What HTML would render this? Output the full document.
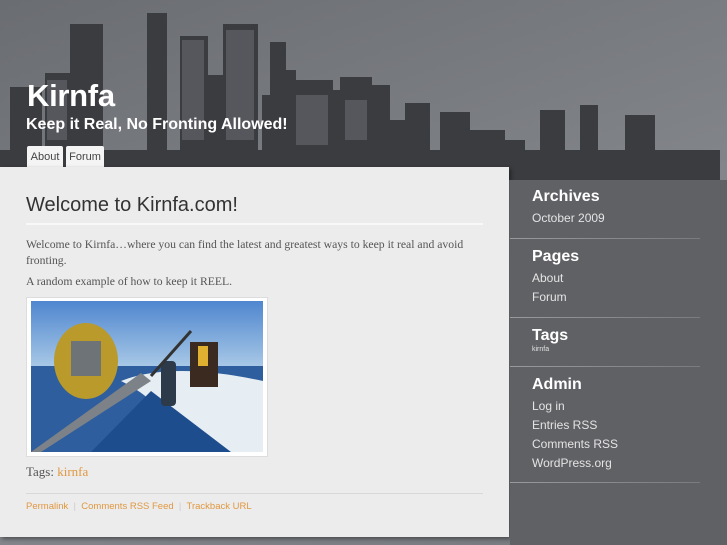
<!DOCTYPE html>
<html><head><meta charset="utf-8"><style>
*{margin:0;padding:0;box-sizing:border-box}
body{width:727px;height:545px;overflow:hidden;background:linear-gradient(160deg,#6a6d72 0%,#85888d 60%,#75787c 100%);font-family:"Liberation Sans",sans-serif;position:relative}
svg.sky{position:absolute;left:0;top:0}
#title{position:absolute;left:27px;top:78px;color:#fff;font-weight:bold;font-size:31px;letter-spacing:-0.3px}
#tag{position:absolute;left:26px;top:116px;color:#fff;font-weight:bold;font-size:16px}
.tab{position:absolute;top:146px;height:21px;background:#f4f4f4;color:#444;font-size:11px;padding:5px 0 0;text-align:center;border-radius:2px 2px 0 0}
#main{position:absolute;left:0;top:167px;width:509px;height:370px;background:#ececec;box-shadow:2px 2px 4px rgba(0,0,0,.4)}
h1{position:absolute;left:26px;top:194px;font-weight:normal;font-size:20px;color:#333}
.hr{position:absolute;left:26px;width:457px;height:2px;background:#f8f8f8}
.p{position:absolute;left:26px;font-family:"Liberation Serif",serif;font-size:11.7px;color:#555;line-height:16px;width:460px}
#side{position:absolute;left:510px;top:180px;width:217px;height:365px;background:#606165}
.sh{position:absolute;left:532px;color:#fff;font-weight:bold;font-size:16px}
.sl{position:absolute;left:532px;color:#e4e4e4;font-size:12px}
.sr{position:absolute;left:510px;width:190px;height:1px;background:linear-gradient(90deg,#9a9a9c,#7a7b7e)}
.lnk{color:#e09840}
</style></head><body>
<svg class="sky" width="727" height="200">
<g fill="#3b3c40">
<rect x="10" y="87" width="32" height="80"/>
<rect x="45" y="73" width="27" height="94"/>
<rect x="70" y="24" width="33" height="143"/>
<rect x="147" y="13" width="20" height="154"/>
<rect x="180" y="36" width="28" height="131"/>
<rect x="208" y="75" width="15" height="92"/>
<rect x="223" y="24" width="35" height="143"/>
<rect x="262" y="95" width="8" height="72"/>
<rect x="270" y="42" width="16" height="125"/>
<rect x="286" y="70" width="10" height="97"/>
<rect x="293" y="80" width="40" height="87"/>
<rect x="333" y="90" width="10" height="77"/>
<rect x="340" y="77" width="32" height="90"/>
<rect x="372" y="85" width="18" height="82"/>
<rect x="390" y="120" width="15" height="47"/>
<rect x="405" y="103" width="25" height="64"/>
<rect x="440" y="112" width="30" height="60"/>
<rect x="470" y="130" width="35" height="45"/>
<rect x="505" y="140" width="20" height="40"/>
<rect x="540" y="110" width="25" height="40"/>
<rect x="580" y="105" width="18" height="45"/>
<rect x="625" y="115" width="30" height="35"/>
<rect x="0" y="150" width="720" height="17"/>
<rect x="509" y="165" width="211" height="15"/>
<polygon points="700,170 720,170 718,205 705,185"/>
</g>
<g fill="#55575c">
<rect x="182" y="40" width="22" height="100"/>
<rect x="226" y="30" width="28" height="110"/>
<rect x="296" y="95" width="32" height="50"/>
<rect x="345" y="100" width="22" height="40"/>
<rect x="47" y="80" width="20" height="60"/>
</g>
</svg>
<div id="title">Kirnfa</div>
<div id="tag">Keep it Real, No Fronting Allowed!</div>
<div class="tab" style="left:27px;width:36px">About</div>
<div class="tab" style="left:66px;width:38px">Forum</div>
<div id="main"></div>
<h1>Welcome to Kirnfa.com!</h1>
<div class="hr" style="top:223px"></div>
<div class="p" style="top:237px">Welcome to Kirnfa…where you can find the latest and greatest ways to keep it real and avoid fronting.</div>
<div class="p" style="top:274px">A random example of how to keep it REEL.</div>
<div style="position:absolute;left:26px;top:297px;width:242px;height:160px;background:#fff;border:1px solid #ddd"></div>
<svg style="position:absolute;left:31px;top:301px" width="232" height="151">
<defs><linearGradient id="s" x1="0" y1="0" x2="0" y2="1"><stop offset="0" stop-color="#4f86cf"/><stop offset="1" stop-color="#a7c7e6"/></linearGradient></defs>
<rect width="232" height="65" fill="url(#s)"/>
<rect y="65" width="232" height="86" fill="#2e5e9e"/>
<path d="M90 80 Q140 60 232 80 L232 151 L130 151 Q150 110 90 80Z" fill="#e6eef4"/>
<path d="M60 151 L120 90 L200 151Z" fill="#1e4d8e"/>
<ellipse cx="55" cy="60" rx="32" ry="38" fill="#b99a2a"/>
<rect x="40" y="40" width="30" height="35" fill="#6e7377"/>
<rect x="130" y="60" width="15" height="45" rx="4" fill="#2c3a4a"/>
<path d="M0 151 L10 151 L120 80 L110 72Z" fill="#7c8288"/>
<path d="M120 75 L160 30" stroke="#333" stroke-width="3"/>
<rect x="159" y="41" width="28" height="45" fill="#3a2a20"/>
<rect x="167" y="45" width="10" height="20" fill="#e0b030"/>
</svg>
<div class="p" style="top:464px;font-size:13px">Tags: <span class="lnk">kirnfa</span></div>
<div class="hr" style="top:493px;height:1px;background:#d8d8d8"></div>
<div style="position:absolute;left:26px;top:501px;font-size:9.5px;color:#e09840">Permalink <span style="color:#ccc">&nbsp;|&nbsp;</span> Comments RSS Feed <span style="color:#ccc">&nbsp;|&nbsp;</span> Trackback URL</div>
<div id="side"></div>
<div class="sh" style="top:188px">Archives</div>
<div class="sl" style="top:211px">October 2009</div>
<div class="sr" style="top:238px"></div>
<div class="sh" style="top:248px">Pages</div>
<div class="sl" style="top:271px">About</div>
<div class="sl" style="top:290px">Forum</div>
<div class="sr" style="top:317px"></div>
<div class="sh" style="top:327px">Tags</div>
<div class="sl" style="top:346px;font-size:7px">kirnfa</div>
<div class="sr" style="top:366px"></div>
<div class="sh" style="top:376px">Admin</div>
<div class="sl" style="top:399px">Log in</div>
<div class="sl" style="top:418px">Entries RSS</div>
<div class="sl" style="top:437px">Comments RSS</div>
<div class="sl" style="top:456px">WordPress.org</div>
<div class="sr" style="top:482px"></div>
</body></html>
